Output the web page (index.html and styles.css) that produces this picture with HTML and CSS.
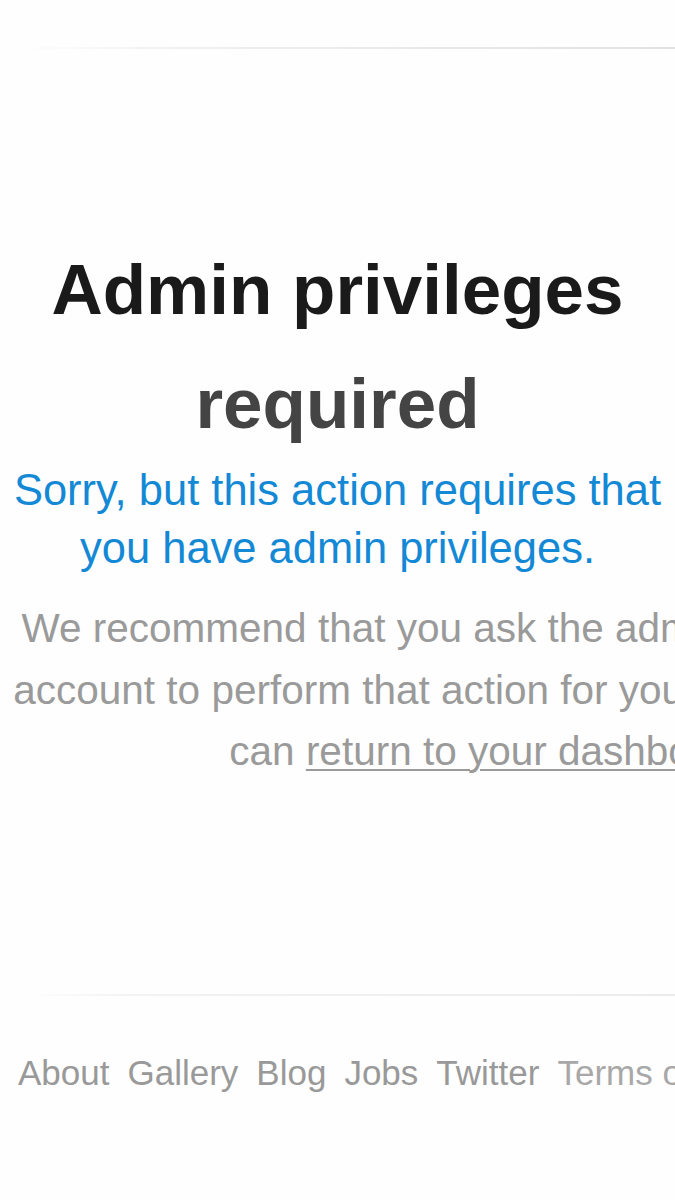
FILE: index.html
```html
<!DOCTYPE html>
<html lang="en">
<head>
<meta charset="utf-8">
<title>Admin privileges required</title>
<link rel="stylesheet" href="styles.css">
</head>
<body>
<header class="topbar"></header>
<div class="rule rule-top"></div>
<main class="content">
  <h1 class="title">Admin privileges <span class="title-dim">required</span></h1>
  <p class="lead">Sorry, but this action requires that you have admin privileges.</p>
  <p class="note">We recommend that you ask the administrator of this account to perform that action for you. Otherwise, you can <a class="note-link" href="#">return to your dashboard</a>.</p>
</main>
<div class="rule rule-bottom"></div>
<footer class="footer">
  <nav class="footer-nav">
    <a class="footer-link" href="#">About</a>
    <a class="footer-link" href="#">Gallery</a>
    <a class="footer-link" href="#">Blog</a>
    <a class="footer-link" href="#">Jobs</a>
    <a class="footer-link" href="#">Twitter</a>
    <a class="footer-link footer-link-light" href="#">Terms of Service</a>
    <a class="footer-link footer-link-light" href="#">Privacy</a>
  </nav>
</footer>
</body>
</html>
```

FILE: styles.css
```css
html, body {
  overflow-x: hidden;
}

body {
  margin: 0;
  background: #fefefe;
  font-family: "Liberation Sans", Arial, Helvetica, sans-serif;
  color: #999;
}

.topbar {
  height: 47px;
}

.rule {
  height: 2px;
}

.rule-top {
  background: linear-gradient(to right, rgba(230,230,230,0) 3%, #f1f1f1 25%, #e9e9e9 60%, #e2e2e2 100%);
}

.rule-bottom {
  background: linear-gradient(to right, rgba(235,235,235,0) 4%, #f2f2f2 20%, #efefef 60%, #ececec 100%);
}

.content {
  padding: 184px 0 211px;
}

.title {
  margin: 0;
  font-size: 71px;
  line-height: 114px;
  font-weight: bold;
  text-align: center;
  color: #1a1a1a;
}

.title-dim {
  color: #444;
}

.lead {
  margin: 0;
  font-size: 43.5px;
  line-height: 58px;
  text-align: center;
  color: #1389d6;
}

.note {
  margin: 21px 0 0;
  width: 990px;
  font-size: 40.5px;
  line-height: 61.5px;
  text-align: center;
  color: #9a9a9a;
}

.note-link {
  color: #9a9a9a;
  text-decoration: underline;
  text-underline-offset: 4px;
  text-decoration-thickness: 2px;
}

.footer {
  padding: 56px 0 96px 18px;
}

.footer-nav {
  display: flex;
  gap: 18px;
  white-space: nowrap;
  font-size: 35px;
  line-height: 42px;
}

.footer-link {
  color: #999;
  text-decoration: none;
}

.footer-link-light {
  color: #a8a8a8;
}
```
